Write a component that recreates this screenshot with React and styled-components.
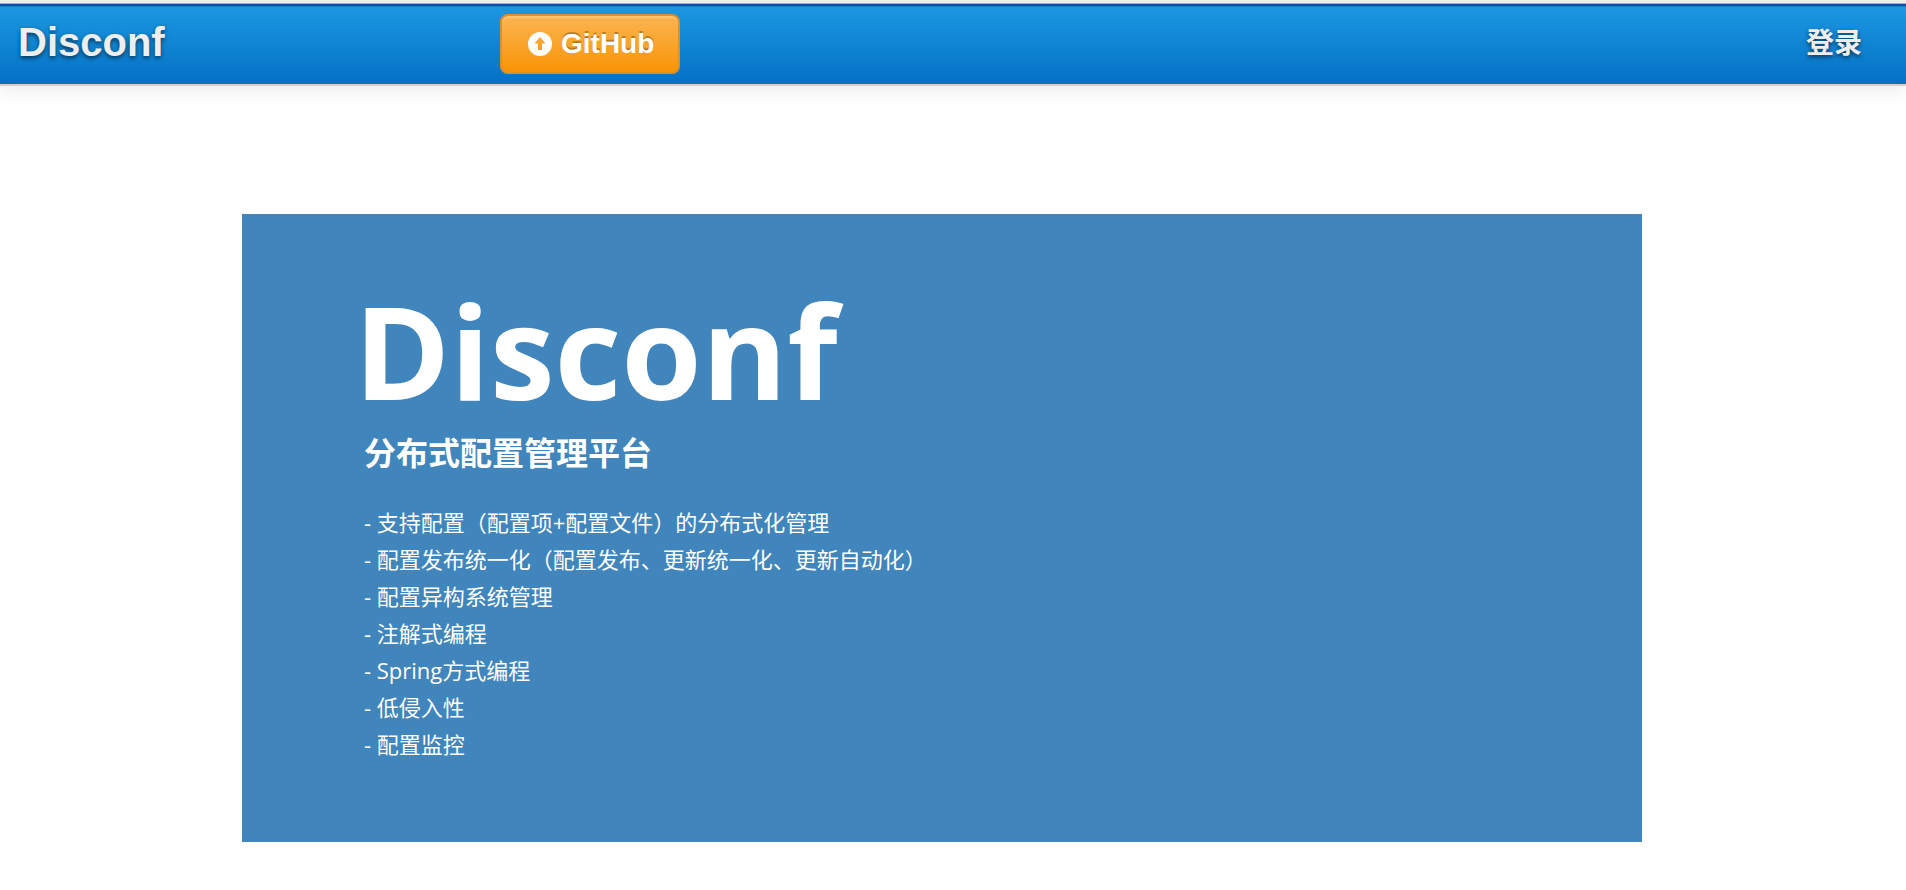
import React from 'react';
import styled, { createGlobalStyle } from 'styled-components';

const latin = '"Liberation Sans", "Noto Sans CJK SC", sans-serif';
const humanist = '"Open Sans", "Noto Sans CJK SC", sans-serif';

const GlobalStyle = createGlobalStyle`
  *, *::before, *::after { box-sizing: border-box; }
  body { margin: 0; background: #fff; font-family: ${latin}; }
`;

const Navbar = styled.header`
  display: flex;
  align-items: center;
  height: 86px;
  padding: 4px 44px 4px 18px;
  border-top: 3px solid #eeeeee;
  border-bottom: 2px solid #d0d0d0;
  background: linear-gradient(#a4adb8 0 1px, #0a4fae 1px 3px, #1580d0 3px 4px, #1b97e1 4px, #0571c5);
  box-shadow: 0 2px 20px rgba(0, 0, 0, 0.1);
`;

const BrandCell = styled.div`
  flex: 0 0 482px;
  padding-bottom: 4px;
`;

const Brand = styled.a`
  color: #eeeeee;
  font-size: 40px;
  line-height: 40px;
  font-weight: 700;
  text-decoration: none;
  text-shadow: 0 2px 4px rgba(0, 0, 0, 0.6);
`;

const GitHubButton = styled.button`
  display: flex;
  align-items: center;
  gap: 9px;
  height: 60px;
  padding: 0 24px 0 26px;
  border: 2px solid #de8f26;
  border-radius: 8px;
  background: linear-gradient(#fbb450, #f89406);
  box-shadow: inset 0 2px 0 rgba(255, 255, 255, 0.2);
  color: #fff;
  font-family: ${latin};
  font-size: 28px;
  line-height: 40px;
  font-weight: 700;
  text-shadow: 0 -2px 0 rgba(0, 0, 0, 0.25);
  cursor: pointer;
`;

const Login = styled.a`
  margin-left: auto;
  color: #eeeeee;
  font-size: 28px;
  line-height: 40px;
  font-weight: 700;
  text-decoration: none;
  text-shadow: 0 2px 4px rgba(0, 0, 0, 0.6);
`;

const Main = styled.main`
  display: flex;
  justify-content: center;
  padding: 128px 22px 48px 0;
`;

const Hero = styled.section`
  width: 100%;
  max-width: 1400px;
  min-height: 628px;
  padding: 56px 112px;
  background: #4085bc;
  color: #fff;
  font-family: ${humanist};
`;

const Title = styled.h1`
  margin: 0 0 4px;
  font-size: 130px;
  line-height: 160px;
  font-weight: 700;
`;

const Subtitle = styled.h2`
  margin: 0;
  padding: 0 10px;
  font-family: ${latin};
  font-size: 32px;
  line-height: 40px;
  font-weight: 700;
`;

const Features = styled.ul`
  margin: 30px 0 0;
  padding: 0 10px;
  list-style: none;
`;

const Feature = styled.li`
  font-size: 22px;
  line-height: 37px;
`;

const features = [
  '支持配置（配置项+配置文件）的分布式化管理',
  '配置发布统一化（配置发布、更新统一化、更新自动化）',
  '配置异构系统管理',
  '注解式编程',
  'Spring方式编程',
  '低侵入性',
  '配置监控',
];

function UploadIcon() {
  return (
    <svg width="24" height="24" viewBox="0 0 24 24" aria-hidden="true">
      <path
        fill="#fff"
        fillRule="evenodd"
        d="M12 0a12 12 0 1 0 0 24a12 12 0 1 0 0-24zM12 5L17.5 11.5H14V18H10V11.5H6.5z"
      />
    </svg>
  );
}

export default function App() {
  return (
    <>
      <GlobalStyle />
      <Navbar>
        <BrandCell>
          <Brand href="#">Disconf</Brand>
        </BrandCell>
        <GitHubButton type="button">
          <UploadIcon />
          GitHub
        </GitHubButton>
        <Login href="#login">登录</Login>
      </Navbar>
      <Main>
        <Hero>
          <Title>Disconf</Title>
          <Subtitle>分布式配置管理平台</Subtitle>
          <Features>
            {features.map((text) => (
              <Feature key={text}>{`- ${text}`}</Feature>
            ))}
          </Features>
        </Hero>
      </Main>
    </>
  );
}
